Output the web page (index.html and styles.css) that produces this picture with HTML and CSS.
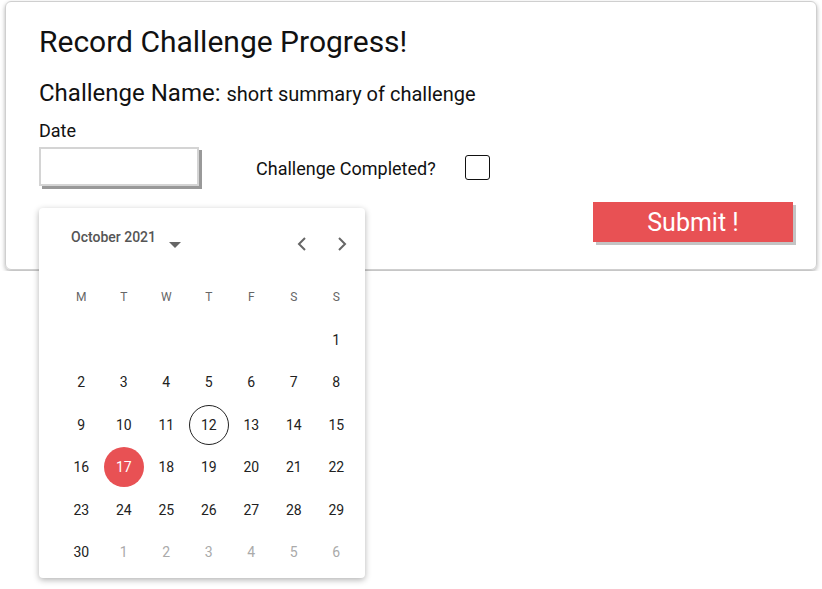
FILE: index.html
```html
<!DOCTYPE html>
<html lang="en">
<head>
    <meta charset="UTF-8">
    <meta name="viewport" content="width=device-width, initial-scale=1.0">
    <title>Record Challenge Progress</title>
    <link rel="stylesheet" href="styles.css">
</head>
<body>

    <div class="card">
        <h1>Record Challenge Progress!</h1>
        <h2>Challenge Name: <span class="summary">short summary of challenge</span></h2>
        <form id="progressForm">
            <label for="date" class="date-label">Date</label>
            <div class="row">
                <input type="text" id="date" class="date-input">
                <label for="done" class="done-label">Challenge Completed?</label>
                <input type="checkbox" id="done" class="check">
            </div>
            <div class="actions">
                <button type="submit" class="submit">Submit !</button>
            </div>
        </form>
    </div>

    <!-- Date picker popup -->
    <div class="picker">
        <div class="picker-head">
            <span class="month">October 2021</span>
            <span class="caret"></span>
            <div class="nav">
                <svg width="24" height="24" viewBox="0 0 24 24"><path d="M15 6l-6 6 6 6" fill="none" stroke="#666" stroke-width="2"/></svg>
                <svg width="24" height="24" viewBox="0 0 24 24"><path d="M9 6l6 6-6 6" fill="none" stroke="#666" stroke-width="2"/></svg>
            </div>
        </div>
        <div class="days" id="days">
            <span class="wd">M</span><span class="wd">T</span><span class="wd">W</span><span class="wd">T</span><span class="wd">F</span><span class="wd">S</span><span class="wd">S</span>
        </div>
    </div>

    <script>
        const days = document.getElementById('days');
        for (let i = 0; i < 6; i++) {
            days.insertAdjacentHTML('beforeend', '<span class="day"></span>');
        }
        for (let d = 1; d <= 30; d++) {
            let cls = 'day';
            if (d === 12) cls += ' today';
            if (d === 17) cls += ' selected';
            days.insertAdjacentHTML('beforeend', `<span class="${cls}"><i>${d}</i></span>`);
        }
        for (let d = 1; d <= 6; d++) {
            days.insertAdjacentHTML('beforeend', `<span class="day other"><i>${d}</i></span>`);
        }
    </script>

</body>
</html>
```

FILE: styles.css
```css
body {
    font-family: Roboto, "Liberation Sans", sans-serif;
    margin: 0;
    padding: 1px 5px;
    background: #fff;
    color: #111;
}
.card {
    height: 269px;
    box-sizing: border-box;
    border: 1px solid #cfcfcf;
    border-radius: 6px;
    box-shadow: 0 2px 4px rgba(0, 0, 0, 0.3);
    padding: 22px 23px 0 33px;
}
h1 {
    font-size: 30px;
    font-weight: 400;
    line-height: 36px;
    margin: 0;
}
h2 {
    font-size: 24px;
    font-weight: 400;
    line-height: 28px;
    margin: 19px 0 0;
}
.summary {
    font-size: 20px;
}
.date-label {
    display: block;
    font-size: 18px;
    line-height: 22px;
    margin-top: 12px;
}
.row {
    display: flex;
    align-items: center;
    margin-top: 5px;
}
.date-input {
    width: 160px;
    height: 39px;
    box-sizing: border-box;
    border: 2px solid #d4d4d4;
    box-shadow: 3px 3px 0 #999;
    margin: 0;
    padding: 0 8px;
    outline: none;
}
.done-label {
    font-size: 18px;
    margin-left: 57px;
    margin-top: 4px;
}
.check {
    appearance: none;
    width: 25px;
    height: 25px;
    border: 1px solid #111;
    border-radius: 3px;
    margin: 2px 0 0 29px;
}
.actions {
    display: flex;
    justify-content: flex-end;
    margin-top: 16px;
}
.submit {
    width: 200px;
    height: 40px;
    border: none;
    background: #e85154;
    color: #fff;
    font-family: inherit;
    font-size: 25px;
    box-shadow: 3px 3px 0 #c4c4c4;
    cursor: pointer;
}
/* popup over the card */
.picker {
    position: absolute;
    left: 39px;
    top: 208px;
    width: 326px;
    height: 370px;
    background: #fff;
    border-radius: 4px;
    box-shadow: 0 2px 6px rgba(0, 0, 0, 0.3);
}
.picker-head {
    display: flex;
    align-items: flex-start;
    height: 68px;
    box-sizing: border-box;
    padding: 20px 11px 0 32px;
}
.month {
    font-size: 14px;
    line-height: 18px;
    color: #555;
    font-weight: 500;
}
.caret {
    margin: 14px 0 0 13px;
    border-left: 6px solid transparent;
    border-right: 6px solid transparent;
    border-top: 6px solid #666;
}
.nav {
    margin-left: auto;
    margin-top: 4px;
    display: flex;
    gap: 16px;
}
.days {
    display: grid;
    grid-template-columns: repeat(7, 42.5px);
    grid-auto-rows: 42.5px;
    padding-left: 21px;
}
.wd, .day {
    display: flex;
    align-items: center;
    justify-content: center;
}
.wd {
    font-size: 12px;
    color: #666;
}
.day {
    font-size: 14px;
    color: #222;
}
.day i {
    font-style: normal;
    width: 40px;
    height: 40px;
    box-sizing: border-box;
    border-radius: 50%;
    display: flex;
    align-items: center;
    justify-content: center;
}
.day.today i {
    border: 1px solid #222;
}
.day.selected i {
    background: #e85154;
    color: #fff;
}
.day.other {
    color: #aaa;
}
```
